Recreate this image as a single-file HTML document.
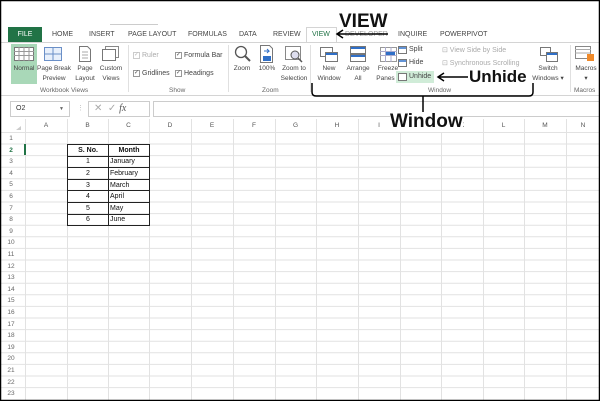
<!DOCTYPE html>
<html><head><meta charset="utf-8"><style>
*{margin:0;padding:0;box-sizing:border-box}
body{width:600px;height:401px;overflow:hidden;background:#fff;font-family:"Liberation Sans",sans-serif;position:relative}
.a{position:absolute;white-space:nowrap}
.t{font-size:7px;color:#444}
.s{font-size:6.5px;color:#444;text-align:center;line-height:10px}
.g{font-size:6.5px;color:#666}
.ch{position:absolute;top:120px;height:12px;font-size:6.5px;color:#555;text-align:center;line-height:12px}
.rh{position:absolute;left:1px;width:20px;height:11.6px;line-height:11.6px;font-size:6.5px;color:#666;text-align:center}
.cb{position:absolute;width:7px;height:7px;border:1px solid #999;background:#fff;font-size:6px;line-height:5px;text-align:center;color:#555}
.big{font-weight:bold;color:#111;font-family:"Liberation Sans",sans-serif}
</style></head><body>
<div class="a" style="left:110px;top:24px;width:48px;height:1px;background:#ccc"></div>
<div class="a" style="left:8px;top:27px;width:34px;height:15px;background:#217346;color:#fff;font-size:7px;text-align:center;line-height:15px">FILE</div>
<div class="a t" style="left:52px;top:31px">HOME</div>
<div class="a t" style="left:89px;top:31px">INSERT</div>
<div class="a t" style="left:128px;top:31px">PAGE LAYOUT</div>
<div class="a t" style="left:188px;top:31px">FORMULAS</div>
<div class="a t" style="left:239px;top:31px">DATA</div>
<div class="a t" style="left:273px;top:31px">REVIEW</div>
<div class="a" style="left:306px;top:27px;width:31px;height:16px;border:1px solid #d4d4d4;border-bottom:none;background:#fff"></div>
<div class="a t" style="left:312px;top:31px;color:#217346">VIEW</div>
<div class="a t" style="left:345px;top:31px;color:#999">DEVELOPER</div>
<div class="a t" style="left:398px;top:31px">INQUIRE</div>
<div class="a t" style="left:440px;top:31px">POWERPIVOT</div>
<div class="a" style="left:1px;top:42px;width:598px;height:1px;background:#d4d4d4"></div>
<div class="a" style="left:1px;top:95px;width:598px;height:1px;background:#d4d4d4"></div>
<div class="a" style="left:11px;top:44px;width:26px;height:40px;background:#a9d8b8"></div>
<svg class="a" style="left:14px;top:47px" width="20" height="14"><rect x=".5" y=".5" width="19" height="13" fill="#fff" stroke="#777"/><path d="M0 4.5h20M0 8.5h20M5 0v14M10 0v14M15 0v14" stroke="#999"/></svg>
<div class="a s" style="left:10px;top:64px;width:28px">Normal</div>
<svg class="a" style="left:44px;top:47px" width="18" height="14"><rect x=".5" y=".5" width="17" height="13" fill="#e8f0fb" stroke="#6a8fc7"/><path d="M9 0v14M0 7h18" stroke="#6a8fc7"/></svg>
<div class="a s" style="left:37px;top:64px;width:34px">Page Break<br>Preview</div>
<svg class="a" style="left:79px;top:46px" width="12" height="16"><path d="M.5.5h8l3 3v12h-11z" fill="#fff" stroke="#777"/><path d="M3 6h6M3 9h6M3 12h6" stroke="#aaa"/></svg>
<div class="a s" style="left:72px;top:64px;width:26px">Page<br>Layout</div>
<svg class="a" style="left:102px;top:46px" width="17" height="15"><rect x="3.5" y=".5" width="13" height="11" fill="#fff" stroke="#888"/><rect x=".5" y="3.5" width="13" height="11" fill="#fff" stroke="#777"/></svg>
<div class="a s" style="left:97px;top:64px;width:28px">Custom<br>Views</div>
<div class="a g" style="left:40px;top:87px">Workbook Views</div>
<div class="a" style="left:128px;top:45px;width:1px;height:47px;background:#e0e0e0"></div>
<div class="cb" style="left:133px;top:52px;border-color:#ccc;color:#bbb">✓</div><div class="a t" style="left:142px;top:52px;color:#aaa">Ruler</div>
<div class="cb" style="left:175px;top:52px">✓</div><div class="a t" style="left:184px;top:52px">Formula Bar</div>
<div class="cb" style="left:133px;top:70px">✓</div><div class="a t" style="left:142px;top:70px">Gridlines</div>
<div class="cb" style="left:175px;top:70px">✓</div><div class="a t" style="left:184px;top:70px">Headings</div>
<div class="a g" style="left:169px;top:87px">Show</div>
<div class="a" style="left:228px;top:45px;width:1px;height:47px;background:#e0e0e0"></div>
<svg class="a" style="left:234px;top:45px" width="17" height="18"><circle cx="7" cy="7" r="5.5" fill="none" stroke="#555" stroke-width="1.3"/><path d="M11 11l5 5" stroke="#555" stroke-width="2"/></svg>
<div class="a s" style="left:230px;top:64px;width:24px">Zoom</div>
<svg class="a" style="left:260px;top:45px" width="14" height="18"><path d="M.5.5h9l3 3v14h-12z" fill="#fff" stroke="#777"/><path d="M4 6h5l-2-2M9 6l-2 2" stroke="#2f6fc7" fill="none"/><rect x="3" y="11" width="8" height="5" fill="#2f6fc7"/></svg>
<div class="a s" style="left:255px;top:64px;width:24px">100%</div>
<svg class="a" style="left:285px;top:46px" width="18" height="17"><rect x=".5" y=".5" width="15" height="13" fill="#fff" stroke="#888"/><circle cx="10" cy="9" r="4" fill="#dde" stroke="#555"/><path d="M13 12l4 4" stroke="#555" stroke-width="1.5"/></svg>
<div class="a s" style="left:279px;top:64px;width:30px">Zoom to<br>Selection</div>
<div class="a g" style="left:262px;top:87px">Zoom</div>
<div class="a" style="left:310px;top:45px;width:1px;height:47px;background:#e0e0e0"></div>
<svg class="a" style="left:320px;top:47px" width="18" height="15"><rect x=".5" y=".5" width="12" height="9" fill="#fff" stroke="#777"/><rect x="5.5" y="5.5" width="12" height="9" fill="#fff" stroke="#777"/><path d="M6 7h11" stroke="#2f6fc7" stroke-width="2"/></svg>
<div class="a s" style="left:315px;top:64px;width:28px">New<br>Window</div>
<svg class="a" style="left:350px;top:46px" width="16" height="16"><rect x=".5" y=".5" width="15" height="7" fill="#fff" stroke="#777"/><rect x=".5" y="8.5" width="15" height="7" fill="#fff" stroke="#777"/><path d="M1 2h14M1 10h14" stroke="#2f6fc7" stroke-width="2"/></svg>
<div class="a s" style="left:343px;top:64px;width:30px">Arrange<br>All</div>
<svg class="a" style="left:380px;top:47px" width="17" height="15"><rect x=".5" y=".5" width="16" height="14" fill="#fff" stroke="#999"/><path d="M0 4.5h17M0 8.5h17M5.5 0v15M11 0v15" stroke="#aac"/><rect x="6" y="5" width="9" height="3" fill="#2f6fc7"/></svg>
<div class="a s" style="left:374px;top:64px;width:28px">Freeze<br>Panes ▾</div>
<svg class="a" style="left:398px;top:46px" width="9" height="8"><rect x=".5" y=".5" width="8" height="7" fill="#fff" stroke="#777"/><path d="M1 2h7" stroke="#2f6fc7" stroke-width="1.5"/></svg>
<div class="a t" style="left:409px;top:46px">Split</div>
<svg class="a" style="left:398px;top:59px" width="9" height="8"><rect x=".5" y=".5" width="8" height="7" fill="#fff" stroke="#777"/><path d="M1 2h7" stroke="#2f6fc7" stroke-width="1.5"/></svg>
<div class="a t" style="left:409px;top:59px">Hide</div>
<div class="a" style="left:396px;top:71px;width:38px;height:12px;background:#d0ecd8"></div>
<svg class="a" style="left:398px;top:73px" width="9" height="8"><rect x=".5" y=".5" width="8" height="7" fill="#fff" stroke="#777"/></svg>
<div class="a t" style="left:409px;top:73px">Unhide</div>
<div class="a t" style="left:442px;top:46px;color:#aaa">⊡ View Side by Side</div>
<div class="a t" style="left:442px;top:59px;color:#aaa">⊡ Synchronous Scrolling</div>
<div class="a g" style="left:428px;top:87px">Window</div>
<svg class="a" style="left:540px;top:47px" width="18" height="15"><rect x=".5" y=".5" width="10" height="8" fill="#fff" stroke="#777"/><rect x="6.5" y="5.5" width="11" height="9" fill="#fff" stroke="#777"/><path d="M7 7h10" stroke="#2f6fc7" stroke-width="2"/></svg>
<div class="a s" style="left:532px;top:64px;width:32px">Switch<br>Windows ▾</div>
<div class="a" style="left:570px;top:45px;width:1px;height:47px;background:#e0e0e0"></div>
<svg class="a" style="left:575px;top:46px" width="20" height="16"><rect x=".5" y=".5" width="15" height="12" fill="#fff" stroke="#888"/><path d="M0 3.5h16M0 7h16" stroke="#aaa"/><rect x="12" y="8" width="7" height="7" fill="#f08a2a"/></svg>
<div class="a s" style="left:572px;top:64px;width:28px">Macros<br>▾</div>
<div class="a g" style="left:574px;top:87px">Macros</div>
<div class="a" style="left:10px;top:101px;width:60px;height:16px;border:1px solid #ccc;font-size:7px;line-height:14px;padding-left:5px;color:#333">O2<span style="position:absolute;right:5px;font-size:5px;color:#666">▼</span></div>
<div class="a" style="left:77px;top:104px;font-size:7px;color:#bbb">⋮</div>
<div class="a" style="left:88px;top:101px;width:62px;height:16px;border:1px solid #ccc;font-size:10px;color:#aaa;line-height:14px;padding-left:5px">✕ &nbsp;✓ <i style="font-family:'Liberation Serif',serif;color:#555">fx</i></div>
<div class="a" style="left:153px;top:101px;width:446px;height:16px;border:1px solid #ccc;border-right:none"></div>
<svg class="a" style="left:0;top:119px" width="600" height="282">
<g stroke="#e2e2e2" stroke-width="1">
<path d="M25.5 0V282M67.5 0V282M108.5 0V282M149.5 0V282M191.5 0V282M233.5 0V282M275.5 0V282M316.5 0V282M358.5 0V282M400.5 0V282M441.5 0V282M483.5 0V282M524.5 0V282M566.5 0V282"/>
<path d="M0 13.5H600M0 25H600M0 36.6H600M0 48.2H600M0 59.8H600M0 71.4H600M0 83H600M0 94.6H600M0 106.2H600M0 117.8H600M0 129.4H600M0 141H600M0 152.6H600M0 164.2H600M0 175.8H600M0 187.4H600M0 199H600M0 210.6H600M0 222.2H600M0 233.8H600M0 245.4H600M0 257H600M0 268.6H600"/>
</g>
<rect x="24" y="25" width="2" height="11" fill="#217346"/>
<path d="M16 11l5-4v4z" fill="#ccc"/>
</svg>
<div class="ch" style="left:25px;width:42px">A</div><div class="ch" style="left:67px;width:41px">B</div><div class="ch" style="left:108px;width:41px">C</div><div class="ch" style="left:149px;width:42px">D</div><div class="ch" style="left:191px;width:42px">E</div><div class="ch" style="left:233px;width:42px">F</div><div class="ch" style="left:275px;width:41px">G</div><div class="ch" style="left:316px;width:42px">H</div><div class="ch" style="left:358px;width:42px">I</div><div class="ch" style="left:441px;width:42px">K</div><div class="ch" style="left:483px;width:41px">L</div><div class="ch" style="left:524px;width:42px">M</div><div class="ch" style="left:566px;width:34px">N</div>
<div class="rh" style="top:133px">1</div><div class="rh" style="top:144.6px;color:#217346;font-weight:bold">2</div><div class="rh" style="top:156.2px">3</div><div class="rh" style="top:167.8px">4</div><div class="rh" style="top:179.4px">5</div><div class="rh" style="top:191px">6</div><div class="rh" style="top:202.6px">7</div><div class="rh" style="top:214.2px">8</div><div class="rh" style="top:225.8px">9</div><div class="rh" style="top:237.4px">10</div><div class="rh" style="top:249px">11</div><div class="rh" style="top:260.6px">12</div><div class="rh" style="top:272.2px">13</div><div class="rh" style="top:283.8px">14</div><div class="rh" style="top:295.4px">15</div><div class="rh" style="top:307px">16</div><div class="rh" style="top:318.6px">17</div><div class="rh" style="top:330.2px">18</div><div class="rh" style="top:341.8px">19</div><div class="rh" style="top:353.4px">20</div><div class="rh" style="top:365px">21</div><div class="rh" style="top:376.6px">22</div><div class="rh" style="top:388.2px">23</div>
<table class="a" style="left:67px;top:144px;border-collapse:collapse;font-size:7px;color:#111">
<tr style="height:11.6px"><td style="width:41px;border:1px solid #222;text-align:center;font-weight:bold">S. No.</td><td style="width:41px;border:1px solid #222;text-align:center;font-weight:bold">Month</td></tr>
<tr style="height:11.6px"><td style="border:1px solid #222;text-align:center">1</td><td style="border:1px solid #222;padding-left:1px">January</td></tr>
<tr style="height:11.6px"><td style="border:1px solid #222;text-align:center">2</td><td style="border:1px solid #222;padding-left:1px">February</td></tr>
<tr style="height:11.6px"><td style="border:1px solid #222;text-align:center">3</td><td style="border:1px solid #222;padding-left:1px">March</td></tr>
<tr style="height:11.6px"><td style="border:1px solid #222;text-align:center">4</td><td style="border:1px solid #222;padding-left:1px">April</td></tr>
<tr style="height:11.6px"><td style="border:1px solid #222;text-align:center">5</td><td style="border:1px solid #222;padding-left:1px">May</td></tr>
<tr style="height:11.6px"><td style="border:1px solid #222;text-align:center">6</td><td style="border:1px solid #222;padding-left:1px">June</td></tr>
</table>
<svg class="a" style="left:0;top:0" width="600" height="401">
<path d="M388 34H337M343 30l-6 4 6 4" stroke="#000" stroke-width="1.5" fill="none"/>
<path d="M468 77H438M444 73l-6 4 6 4" stroke="#000" stroke-width="1.5" fill="none"/>
<path d="M312 83V92q0 4 4 4H529q4 0 4-4V83M423 96V113" stroke="#000" stroke-width="1.5" fill="none"/>
<rect x=".5" y=".5" width="599" height="400" fill="none" stroke="#000" stroke-width="1.5"/>
</svg>
<div class="a big" style="left:339px;top:11px;font-size:19px">VIEW</div>
<div class="a big" style="left:469px;top:67px;font-size:17px">Unhide</div>
<div class="a big" style="left:390px;top:112px;font-size:19px;background:#fff;line-height:20px">Window</div>
</body></html>
